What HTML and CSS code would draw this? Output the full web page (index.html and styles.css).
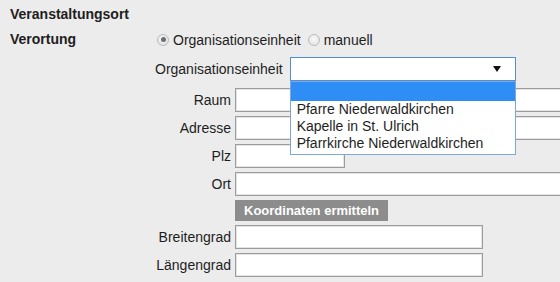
FILE: index.html
```html
<!DOCTYPE html>
<html lang="de">
<head>
<meta charset="utf-8">
<title>Veranstaltungsort</title>
<link rel="stylesheet" href="styles.css">
</head>
<body>
<div class="page">
  <div class="title">Veranstaltungsort</div>
  <div class="verortung">
    <span class="vlabel">Verortung</span>
    <label class="radio"><span class="rb checked"></span>Organisationseinheit</label>
    <label class="radio second"><span class="rb"></span>manuell</label>
  </div>
  <div class="orgrow">
    <span class="orglabel">Organisationseinheit</span>
    <div class="select">
      <svg class="arrow" width="8" height="6" viewBox="0 0 8 6"><polygon points="0,0 8,0 4,6" fill="#111"/></svg>
      <ul class="dropdown">
        <li class="opt selected">&nbsp;</li>
        <li class="opt">Pfarre Niederwaldkirchen</li>
        <li class="opt">Kapelle in St. Ulrich</li>
        <li class="opt">Pfarrkirche Niederwaldkirchen</li>
      </ul>
    </div>
  </div>
  <div class="fields">
    <label class="flabel">Raum</label><input class="inp wide" type="text">
    <label class="flabel">Adresse</label><input class="inp wide" type="text">
    <label class="flabel">Plz</label><input class="inp short" type="text">
    <label class="flabel">Ort</label><input class="inp wide" type="text">
    <span></span><button class="btn" type="button">Koordinaten ermitteln</button>
    <label class="flabel">Breitengrad</label><input class="inp mid" type="text">
    <label class="flabel">Längengrad</label><input class="inp mid" type="text">
  </div>
</div>
</body>
</html>
```
FILE: styles.css
```css
html, body {
  margin: 0;
  padding: 0;
  overflow: hidden;
  background: #ececec;
  font-family: "Liberation Sans", Arial, sans-serif;
  font-size: 14px;
  color: #1e1e1e;
}

.page {
  padding: 6px 0 0 10px;
}

.title {
  font-weight: bold;
  line-height: 16px;
  height: 16px;
}

.verortung {
  display: flex;
  align-items: center;
  height: 16px;
  margin-top: 9px;
}

.vlabel {
  width: 147px;
  font-weight: bold;
}

.radio {
  display: flex;
  align-items: center;
  line-height: 16px;
  margin-top: 1px;
}

.radio.second {
  margin-left: 7px;
}

.rb {
  position: relative;
  box-sizing: border-box;
  width: 12px;
  height: 12px;
  margin-right: 4px;
  border: 1px solid #bdbdbd;
  border-radius: 50%;
  background: radial-gradient(circle at 50% 40%, #fafafa, #dcdcdc);
}

.rb.checked::after {
  content: "";
  position: absolute;
  left: 2.5px;
  top: 2.5px;
  width: 5px;
  height: 5px;
  border-radius: 50%;
  background: #6e6e6e;
}

.orgrow {
  display: flex;
  align-items: center;
  gap: 7px;
  margin-top: 10px;
  padding-left: 145px;
}

.orglabel {
  line-height: 16px;
}

.select {
  position: relative;
  box-sizing: border-box;
  width: 226px;
  height: 24px;
  background: #fff;
  border: 1px solid #4f8fd6;
}

.arrow {
  position: absolute;
  right: 14px;
  top: 8px;
}

.dropdown {
  position: absolute;
  left: -1px;
  top: 23px;
  box-sizing: border-box;
  width: 226px;
  margin: 0;
  padding: 0 0 2px;
  list-style: none;
  background: #fff;
  border: 1px solid #82a7d6;
  z-index: 2;
}

.opt {
  height: 17px;
  line-height: 17px;
  padding-left: 6px;
  white-space: nowrap;
}

.opt.selected {
  height: 19px;
  background: #2e8ef5;
}

.fields {
  display: grid;
  grid-template-columns: 225px auto;
  row-gap: 4px;
  margin-top: 7px;
  justify-items: start;
  align-items: center;
}

.flabel {
  justify-self: end;
  padding-right: 4px;
  line-height: 16px;
}

.inp {
  box-sizing: border-box;
  height: 24px;
  margin: 0;
  padding: 0 3px;
  background: #fff;
  border: 1px solid #9c9c9c;
  box-shadow: inset 0 0 0 1px #e4e4e4;
  font: inherit;
  outline: none;
}

.inp.wide {
  width: 340px;
}

.inp.short {
  width: 110px;
}

.inp.mid {
  width: 248px;
}

.btn {
  height: 21px;
  margin: 0;
  padding: 0 9px;
  border: none;
  background: #8c8c8c;
  color: #fff;
  font: bold 13px "Liberation Sans", Arial, sans-serif;
  line-height: 21px;
}
```
